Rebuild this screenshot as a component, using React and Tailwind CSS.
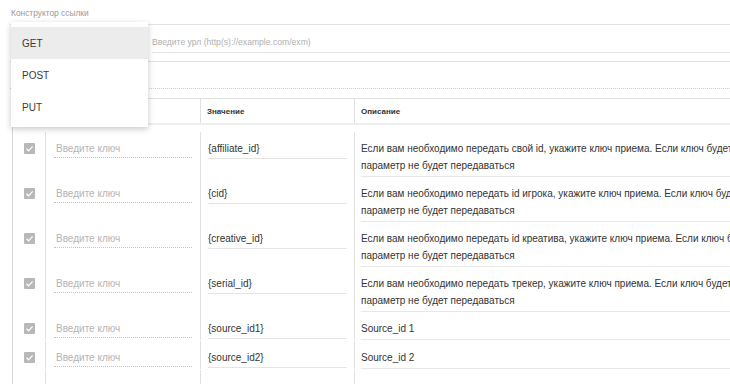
import React from 'react';

const rows = [
  { value: '{affiliate_id}', desc: ['Если вам необходимо передать свой id, укажите ключ приема. Если ключ будет пустым,', 'параметр не будет передаваться'] },
  { value: '{cid}', desc: ['Если вам необходимо передать id игрока, укажите ключ приема. Если ключ будет пустым,', 'параметр не будет передаваться'] },
  { value: '{creative_id}', desc: ['Если вам необходимо передать id креатива, укажите ключ приема. Если ключ будет пустым,', 'параметр не будет передаваться'] },
  { value: '{serial_id}', desc: ['Если вам необходимо передать трекер, укажите ключ приема. Если ключ будет пустым,', 'параметр не будет передаваться'] },
  { value: '{source_id1}', desc: ['Source_id 1'] },
  { value: '{source_id2}', desc: ['Source_id 2'] },
];

const Checkbox = () => (
  <svg width="11" height="11" viewBox="0 0 11 11">
    <rect x="0" y="0" width="11" height="11" rx="1" fill="#b8b8b8" />
    <polyline points="2.5,5.8 4.6,7.8 8.6,3.4" fill="none" stroke="#ffffff" strokeWidth="1.2" />
  </svg>
);

const App = () => {
  return (
    <div className="w-[730px] h-[384px] overflow-hidden relative bg-white font-['Liberation_Sans',Arial,sans-serif] text-[10px] text-[#333]">
      {/* Title */}
      <div className="pl-[11px] pt-[5px] h-[22px] leading-[17px] text-[8.4px] text-[#9a9a9a]">Конструктор ссылки</div>

      {/* URL row */}
      <div className="ml-[10px] mt-[2px] border-t border-b border-[#e2e2e2] flex">
        <div className="w-[138px] shrink-0" />
        <div className="flex-1 ml-[4px] pt-[9px] mb-[8px]">
          <div className="leading-[17px] pb-[1px] border-b border-[#e4e4e4] text-[#b0b0b0] text-[8.6px] whitespace-nowrap">
            Введите урл (http(s)://example.com/exm)
          </div>
        </div>
      </div>

      {/* Generated link */}
      <div className="ml-[10px] h-[27px] border-b border-dotted border-[#cfcfcf]" />

      {/* Table */}
      <div className="ml-[12px] mt-[9px] border-t border-l border-l-dotted border-[#e0e0e0] border-l-[#d6d6d6]">
        <div className="flex h-[26px] border-b-2 border-[#eeeeee] font-bold text-[8px] text-[#333]">
          <div className="w-[33px] shrink-0 border-r border-[#e0e0e0]" />
          <div className="w-[155px] shrink-0 border-r border-[#e0e0e0] pl-[8px] leading-[25px]">Ключ</div>
          <div className="w-[154px] shrink-0 border-r border-[#e0e0e0] pl-[6px] leading-[25px]">Значение</div>
          <div className="flex-1 pl-[6px] leading-[25px] whitespace-nowrap">Описание</div>
        </div>
        <div className="flex flex-col pt-[7px]">
          {rows.map((row, i) => (
            <div key={i} className={`flex ${row.desc.length > 1 ? '' : 'pb-[1px]'}`}>
              <div className="w-[33px] shrink-0 border-r border-[#e0e0e0] pt-[8px]">
                <div className="h-[17px] flex items-center justify-center">
                  <Checkbox />
                </div>
              </div>
              <div className="w-[155px] shrink-0 border-r border-[#e0e0e0] pt-[8px] px-[8px]">
                <div className="leading-[17px] pl-[2px] border-b border-dotted border-[#c4c4c4] text-[#b4b4b4]">Введите ключ</div>
              </div>
              <div className="w-[154px] shrink-0 border-r border-[#e0e0e0] pt-[8px] px-[7px]">
                <div className="leading-[17px] pb-[1px] border-b border-[#e4e4e4]">{row.value}</div>
              </div>
              <div className="flex-1 pt-[8px] pl-[6px]">
                <div className="leading-[17px] pb-[2px] border-b border-[#e8e8e8] whitespace-nowrap">
                  {row.desc.map((line, j) => (
                    <div key={j}>{line}</div>
                  ))}
                </div>
              </div>
            </div>
          ))}
          <div className="flex h-[20px]">
            <div className="w-[33px] shrink-0 border-r border-[#e0e0e0]" />
            <div className="w-[155px] shrink-0 border-r border-[#e0e0e0]" />
            <div className="w-[154px] shrink-0 border-r border-[#e0e0e0]" />
            <div className="flex-1" />
          </div>
        </div>
      </div>

      {/* Method dropdown */}
      <div className="absolute left-[11px] top-[22px] w-[137px] bg-white pt-[5px] pb-[4px] shadow-[0_2px_6px_rgba(0,0,0,0.22)] text-[10px] text-[#3a3a3a]">
        <div className="h-[32px] pl-[11px] flex items-center bg-[#ececec]">GET</div>
        <div className="h-[32px] pl-[11px] flex items-center">POST</div>
        <div className="h-[32px] pl-[11px] flex items-center">PUT</div>
      </div>
    </div>
  );
};

export default App;
